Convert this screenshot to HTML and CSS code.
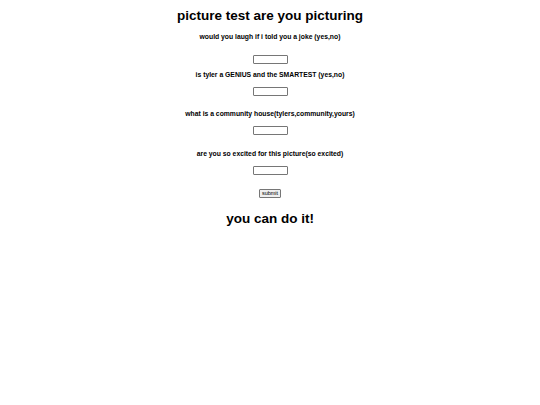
FILE: index.html
```html
<!DOCTYPE html>
<html>
<head>
<meta charset="utf-8">
<link rel="stylesheet" href="styles.css">
</head>
<body>
<h1 class="title">picture test are you picturing</h1>
<form class="quiz">
  <p class="q q1">would you laugh if i told you a joke (yes,no)</p>
  <input class="answer" type="text">
  <p class="q q2">is tyler a GENIUS and the SMARTEST (yes,no)</p>
  <input class="answer" type="text">
  <p class="q q3">what is a community house(tylers,community,yours)</p>
  <input class="answer" type="text">
  <p class="q q4">are you so excited for this picture(so excited)</p>
  <input class="answer" type="text">
  <button class="submit" type="button">submit</button>
</form>
<h2 class="cheer">you can do it!</h2>
</body>
</html>
```
FILE: styles.css
```css
html, body {
  margin: 0;
  padding: 0;
  background: #fff;
}
body {
  font-family: "Liberation Sans", Arial, sans-serif;
  color: #000;
  text-align: center;
  width: 540px;
}
.title {
  font-size: 13.5px;
  font-weight: bold;
  margin: 0;
  padding-top: 8px;
  line-height: 16px;
}
.quiz {
  display: flex;
  flex-direction: column;
  align-items: center;
}
.q {
  font-size: 6.8px;
  font-weight: bold;
  margin: 0;
  line-height: 8px;
}
.q1 { margin-top: 9px; }
.q2 { margin-top: 7px; }
.q3 { margin-top: 14px; }
.q4 { margin-top: 15px; }
.answer {
  box-sizing: border-box;
  width: 35px;
  height: 9px;
  padding: 0;
  border: 1px solid #767676;
  border-radius: 1px;
  background: #fff;
  margin-top: 8px;
}
.q1 + .answer { margin-top: 14px; }
.submit {
  box-sizing: border-box;
  margin-top: 14px;
  height: 9px;
  padding: 0 2px;
  font-family: "Liberation Sans", Arial, sans-serif;
  font-size: 5.5px;
  line-height: 7px;
  background: #efefef;
  border: 1px solid #767676;
  border-radius: 1px;
  color: #000;
}
.cheer {
  font-size: 13.5px;
  font-weight: bold;
  margin: 13px 0 0;
  line-height: 16px;
}
```
